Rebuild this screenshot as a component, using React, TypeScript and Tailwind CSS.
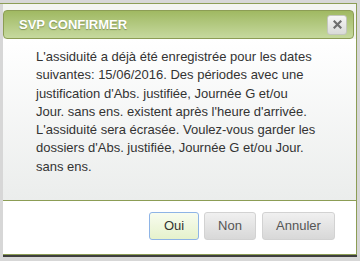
import React from 'react';

const lines = [
  "L'assiduité a déjà été enregistrée pour les dates",
  'suivantes: 15/06/2016. Des périodes avec une',
  "justification d'Abs. justifiée, Journée G et/ou",
  "Jour. sans ens. existent après l'heure d'arrivée.",
  "L'assiduité sera écrasée. Voulez-vous garder les",
  "dossiers d'Abs. justifiée, Journée G et/ou Jour.",
  'sans ens.',
];

export default function App() {
  return (
    <div
      className="w-[360px] h-[261px] bg-[#d7d7d7] overflow-hidden pt-[3px]"
      style={{ fontFamily: '"Liberation Sans", Arial, sans-serif' }}
    >
      {/* Dialog */}
      <div className="w-[357px] border-t border-[#8c9d55] pl-[3px]">
        <div className="border-r border-b border-[#8c9d55] bg-[#f3f4f1] shadow-[0_2px_0_#3e3e3e]">
          {/* Title bar */}
          <div className="pt-[6px] pr-[2px]">
            <div className="h-[29px] rounded-[4px] border border-[#8c9d55] bg-gradient-to-b from-[#a0b962] to-[#c6d99e] flex items-center justify-between pl-[15px] pr-[6px]">
              <span className="text-[13px] font-bold text-white [text-shadow:0_1px_1px_rgba(60,70,30,0.45)]">
                SVP CONFIRMER
              </span>
              <button
                aria-label="Close"
                className="w-[20px] h-[20px] rounded-[3px] border border-[#c3c6bd] bg-gradient-to-b from-[#f6f6f6] to-[#d9dad8] flex items-center justify-center"
              >
                <svg width="9" height="9" viewBox="0 0 9 9">
                  <path d="M1.5 1.5 L7.5 7.5 M7.5 1.5 L1.5 7.5" stroke="#6e6e6e" strokeWidth="2.2" strokeLinecap="square" />
                </svg>
              </button>
            </div>
          </div>

          {/* Content */}
          <div className="h-[161px] bg-gradient-to-b from-white to-[#ebedec] pl-[33px] pt-[9px] text-[13px] leading-[18.3px] text-[#333]">
            {lines.map((l) => (
              <div key={l} className="whitespace-nowrap">{l}</div>
            ))}
          </div>

          {/* Button pane */}
          <div className="h-[54px] bg-white border-t border-[#8c9d55] flex items-start justify-end pt-[11px] pr-[21px] gap-[5px] text-[13px]">
            <button className="w-[50px] h-[28px] rounded-[3px] border border-[#8eb4e6] bg-gradient-to-b from-[#f8fcef] to-[#e6f2cc] text-[#333]">
              Oui
            </button>
            <button className="w-[52px] h-[28px] rounded-[3px] border border-[#d2d2d2] bg-gradient-to-b from-[#f0f0f0] to-[#d8d8d8] text-[#555] mr-[1px]">
              Non
            </button>
            <button className="w-[73px] h-[28px] rounded-[3px] border border-[#d2d2d2] bg-gradient-to-b from-[#f0f0f0] to-[#d8d8d8] text-[#555]">
              Annuler
            </button>
          </div>
        </div>
      </div>
    </div>
  );
}
